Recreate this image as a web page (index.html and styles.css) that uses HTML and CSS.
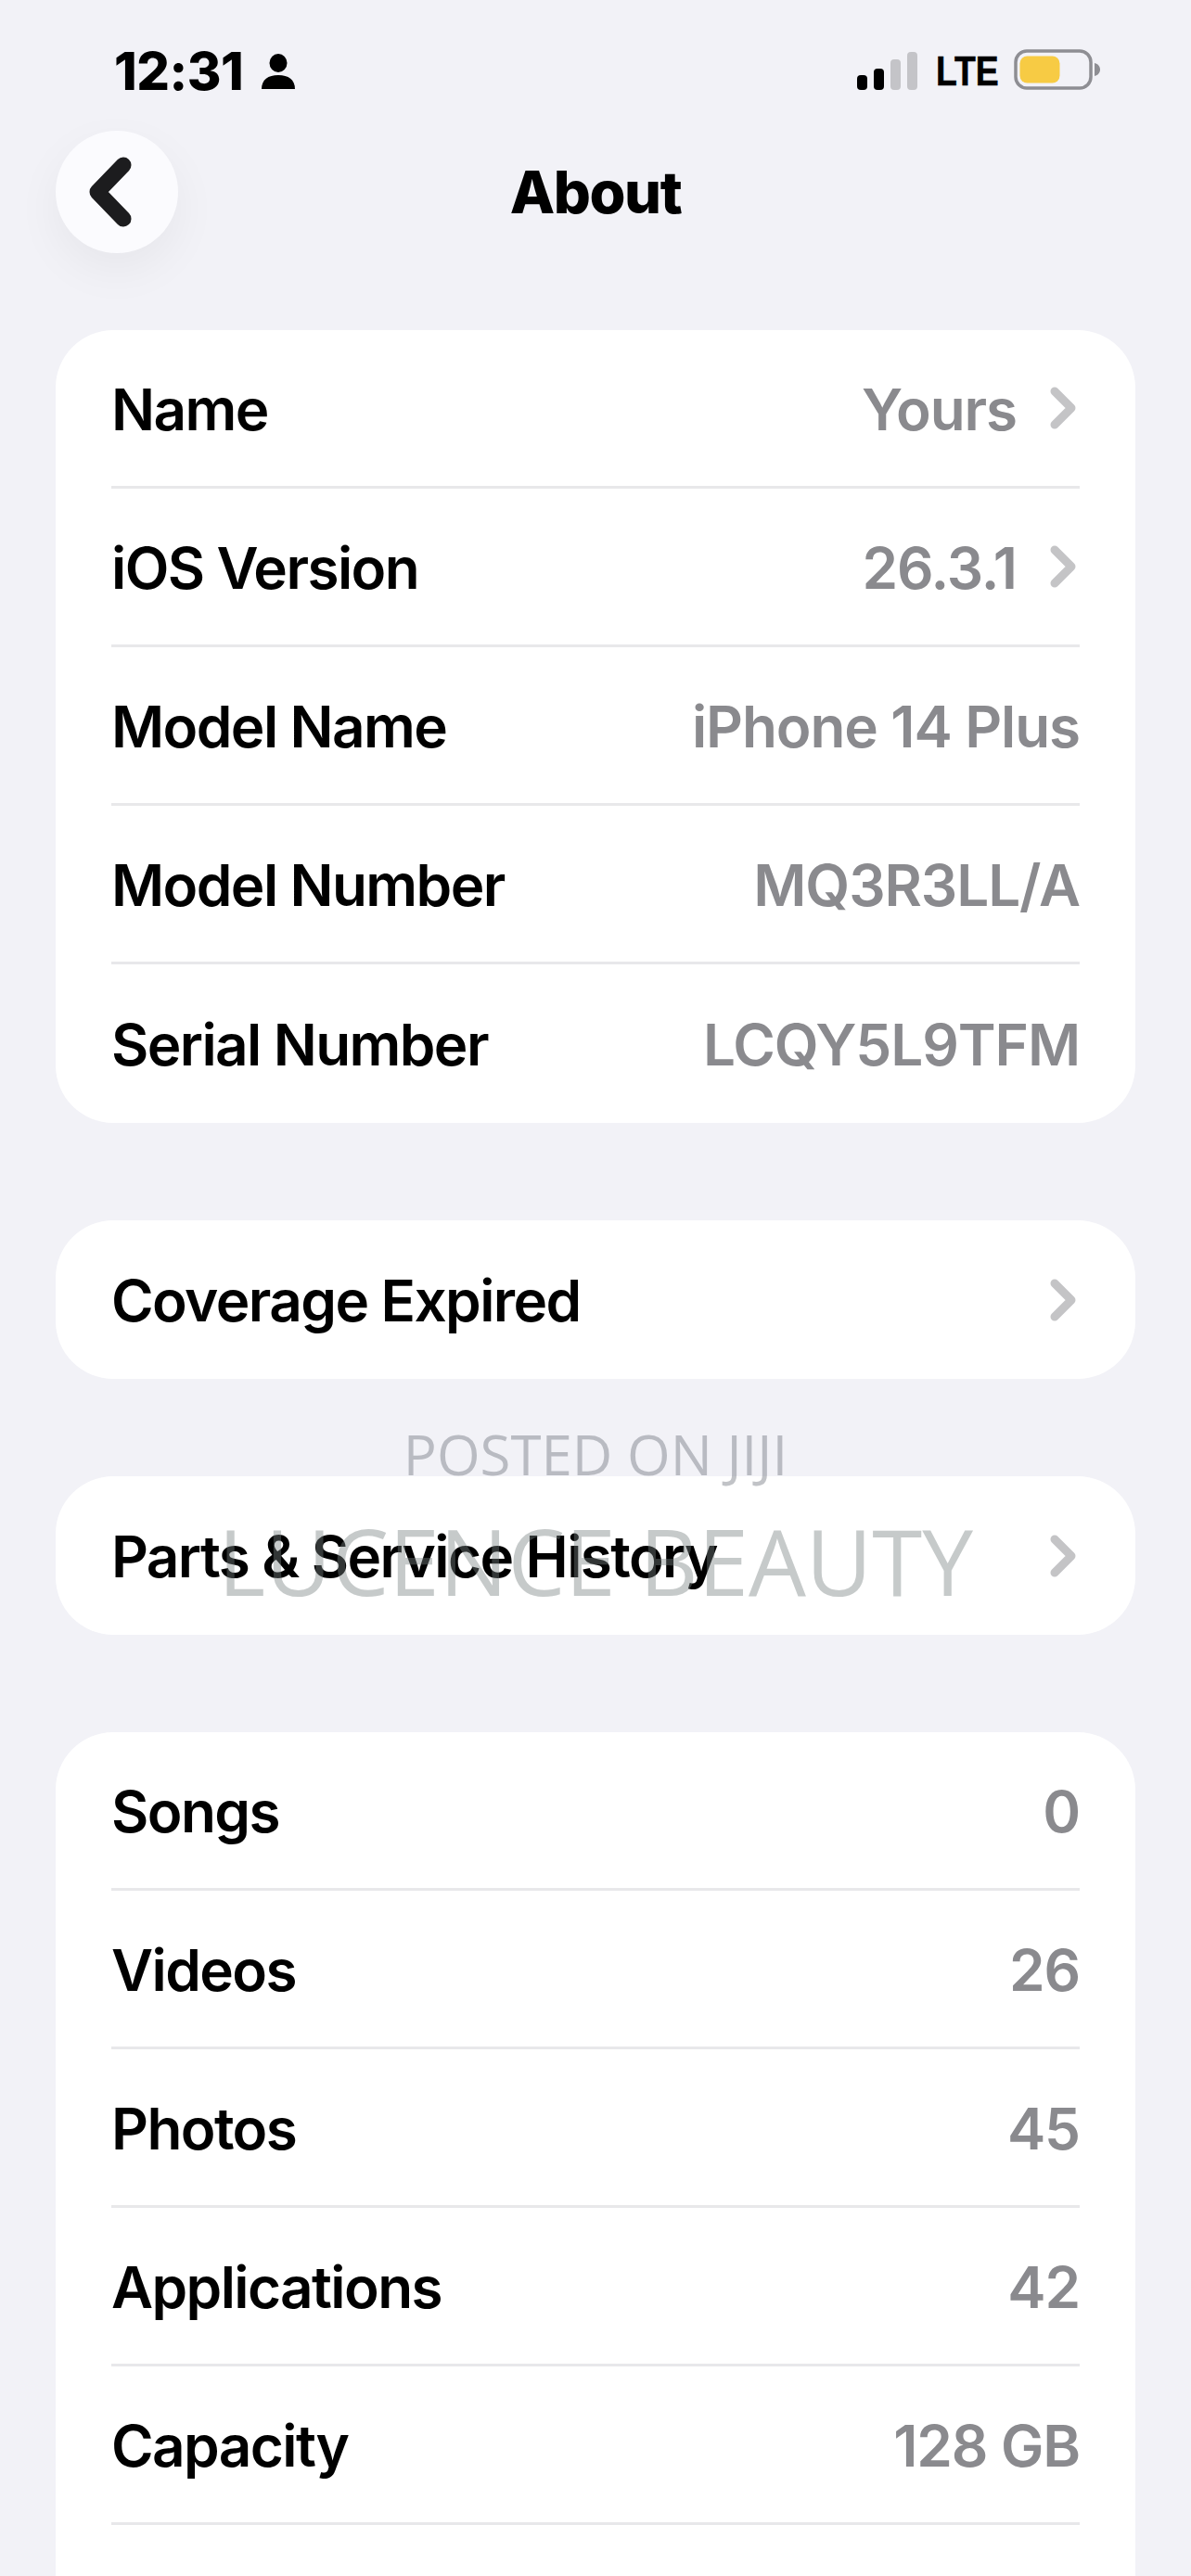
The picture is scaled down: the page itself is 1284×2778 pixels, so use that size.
FILE: index.html
```html
<!DOCTYPE html>
<html lang="en">
<head>
<meta charset="utf-8">
<title>About</title>
<link rel="stylesheet" href="styles.css">
</head>
<body>
<div class="screen">
  <header class="status">
    <div class="status-left">
      <span class="time">12:31</span>
      <svg class="person" viewBox="0 0 36 38"><ellipse cx="18" cy="10" rx="9.5" ry="10"/><path d="M0 38c0-10 7-15 18-15s18 5 18 15z"/></svg>
    </div>
    <div class="status-right">
      <div class="signal"><i class="b1"></i><i class="b2"></i><i class="b3"></i><i class="b4"></i></div>
      <span class="lte">LTE</span>
      <svg class="battery" viewBox="0 0 94 44"><rect x="2" y="2" width="81" height="40" rx="12" fill="none" stroke="#8e8e93" stroke-width="3.5"/><rect x="6.5" y="7.5" width="43" height="29" rx="8" fill="#f7cb44"/><path d="M87 15c4 1 6 4 6 7s-2 6-6 7z" fill="#8e8e93"/></svg>
    </div>
  </header>
  <nav class="nav">
    <button class="back"><svg viewBox="0 0 46 76"><path d="M37 9 9 38l28 29" fill="none" stroke="#1c1c1e" stroke-width="17" stroke-linecap="round" stroke-linejoin="round"/></svg></button>
    <h1 class="title">About</h1>
  </nav>
  <main class="groups">
    <section class="card">
      <div class="row"><span class="label">Name</span><span class="value">Yours</span><svg class="chev" viewBox="0 0 28 46"><path d="M5 5l18 18L5 41" fill="none" stroke="#c4c4c6" stroke-width="9" stroke-linecap="round" stroke-linejoin="round"/></svg></div>
      <div class="row"><span class="label">iOS Version</span><span class="value">26.3.1</span><svg class="chev" viewBox="0 0 28 46"><path d="M5 5l18 18L5 41" fill="none" stroke="#c4c4c6" stroke-width="9" stroke-linecap="round" stroke-linejoin="round"/></svg></div>
      <div class="row"><span class="label">Model Name</span><span class="value">iPhone 14 Plus</span></div>
      <div class="row"><span class="label">Model Number</span><span class="value">MQ3R3LL/A</span></div>
      <div class="row"><span class="label">Serial Number</span><span class="value">LCQY5L9TFM</span></div>
    </section>
    <section class="card">
      <div class="row"><span class="label">Coverage Expired</span><svg class="chev" viewBox="0 0 28 46"><path d="M5 5l18 18L5 41" fill="none" stroke="#c4c4c6" stroke-width="9" stroke-linecap="round" stroke-linejoin="round"/></svg></div>
    </section>
    <section class="card">
      <div class="row"><span class="label">Parts &amp; Service History</span><svg class="chev" viewBox="0 0 28 46"><path d="M5 5l18 18L5 41" fill="none" stroke="#c4c4c6" stroke-width="9" stroke-linecap="round" stroke-linejoin="round"/></svg></div>
    </section>
    <section class="card card-last">
      <div class="row"><span class="label">Songs</span><span class="value">0</span></div>
      <div class="row"><span class="label">Videos</span><span class="value">26</span></div>
      <div class="row"><span class="label">Photos</span><span class="value">45</span></div>
      <div class="row"><span class="label">Applications</span><span class="value">42</span></div>
      <div class="row"><span class="label">Capacity</span><span class="value">128 GB</span></div>
      <div class="row row-empty"></div>
    </section>
  </main>
  <div class="watermark">
    <div class="wm-small">POSTED ON JIJI</div>
    <div class="wm-big">LUCENCE BEAUTY</div>
  </div>
</div>
</body>
</html>
```
FILE: styles.css
```css
* { box-sizing: border-box; }
html, body { margin: 0; padding: 0; }
body { background: #f2f2f7; font-family: Inter, "Liberation Sans", sans-serif; }
.screen { position: relative; width: 1284px; height: 2778px; overflow: hidden; background: #f2f2f7; }

.status { height: 141px; padding: 54px 97px 0 123px; display: flex; justify-content: space-between; align-items: flex-start; }
.status-left { display: flex; align-items: center; gap: 20px; height: 42px; margin-top: 2px; }
.time { font-size: 56px; font-weight: 800; line-height: 42px; color: #000; letter-spacing: -.5px; }
.person { width: 36px; height: 38px; fill: #000; }
.status-right { display: flex; align-items: flex-end; height: 43px; }
.signal { display: flex; align-items: flex-end; gap: 7px; height: 41px; margin-right: 20px; }
.signal i { display: block; width: 11px; border-radius: 4px; background: #000; }
.signal .b1 { height: 16px; }
.signal .b2 { height: 23px; }
.signal .b3 { height: 33px; background: #c4c4c8; }
.signal .b4 { height: 41px; background: #c4c4c8; }
.lte { width: 64px; font-family: "Liberation Sans", sans-serif; font-size: 45px; font-weight: 700; line-height: 40px; color: #000; margin-right: 20px; white-space: nowrap; transform: scaleX(.83); transform-origin: left center; -webkit-text-stroke: .6px #000; }
.battery { width: 94px; height: 44px; }

.nav { position: relative; height: 132px; padding-left: 60px; display: flex; align-items: center; }
.back { width: 132px; height: 132px; border: 0; padding: 0; border-radius: 50%; background: #fbfbfe; box-shadow: 0 18px 50px rgba(0,0,0,.05); display: flex; align-items: center; justify-content: center; }
.back svg { width: 46px; height: 76px; margin-right: 14px; }
.title { position: absolute; left: 0; right: 0; top: 0; margin: 0; text-align: center; font-size: 63px; line-height: 132px; font-weight: 800; color: #000; letter-spacing: -1.4px; }

.groups { padding: 83px 60px 0; display: flex; flex-direction: column; gap: 105px; }
.card { background: #fff; border-radius: 62px; padding: 0 60px; }
.card-last { border-radius: 62px 62px 0 0; }
.row { height: 171px; display: flex; align-items: center; border-bottom: 3px solid #e8e8ea; font-size: 62px; }
.row:last-child { border-bottom: 0; }
.label { color: #000; font-weight: 600; letter-spacing: -1.6px; padding-top: 2px; }
.value { margin-left: auto; color: #8a8a8e; font-weight: 600; letter-spacing: -1.1px; padding-top: 2px; }
.chev { width: 28px; height: 46px; margin-left: 36px; margin-right: 4px; flex: none; }
.label + .chev { margin-left: auto; }
.row-empty { height: 60px; }

.watermark { position: absolute; left: 0; right: 0; top: 1529px; text-align: center; font-family: "Open Sans", sans-serif; pointer-events: none; }
.wm-small { font-size: 60px; line-height: 78px; color: rgba(100,104,115,.4); }
.wm-big { font-size: 98px; line-height: 130px; color: rgba(120,128,128,.42); margin-top: 11px; }
```
